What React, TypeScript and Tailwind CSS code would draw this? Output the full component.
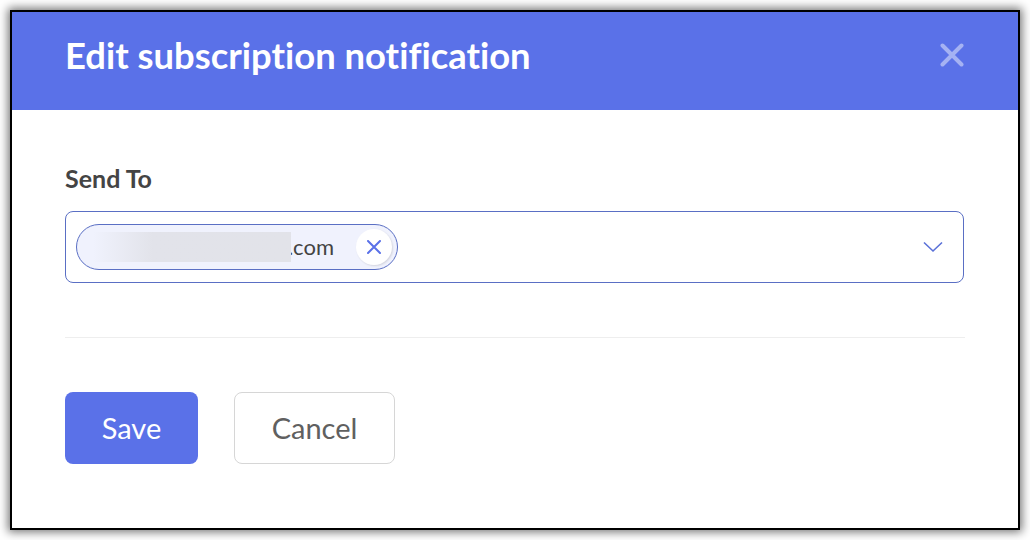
const App = () => {
  return (
    <div className="w-[1030px] h-[540px] bg-white p-[10px] font-['Lato',sans-serif] [font-variant-ligatures:none]">
      <div className="w-[1010px] h-[520px] border-2 border-black bg-white shadow-[0_0_9px_2px_rgba(0,0,0,0.55)] flex flex-col">
        {/* Header */}
        <div className="h-[98px] shrink-0 bg-[#5a71e8] flex items-center justify-between pl-[53px] pr-[56px] pb-[12px]">
          <h1 className="text-[36.4px] leading-[44px] font-bold text-white">Edit subscription notification</h1>
          <svg className="-mr-[2px]" width="24" height="24" viewBox="0 0 24 24" fill="none" stroke="#a5b2f3" strokeWidth="4" strokeLinecap="round">
            <path d="M2.5 2.5 L21.5 21.5 M21.5 2.5 L2.5 21.5" />
          </svg>
        </div>

        {/* Body */}
        <div className="flex-1 px-[53px] pt-[53px]">
          <label className="block text-[25px] leading-[30px] font-bold text-[#444444]">Send To</label>
          <div className="mt-[18px] w-[899px] h-[72px] border border-[#5a6fc4] rounded-[8px] flex items-center justify-between pl-[10px] pr-[20px]">
            <div className="relative h-[46px] w-[322px] border border-[#5a6fc4] rounded-full bg-[#f0f2fd] flex items-center justify-end pr-[5px]">
              {/* blurred address */}
              <div className="absolute left-[16px] top-[7px] w-[198px] h-[30px] bg-gradient-to-r from-[#f0f2fd] via-[#e2e3ea] via-[30%] to-[#e2e3e9]" />
              <span className="text-[22px] leading-[28px] text-[#444444] mr-[22px] -mt-[1px]">.com</span>
              <div className="w-[36px] h-[36px] rounded-full bg-white shadow-[1px_1px_2px_rgba(0,0,0,0.12)] flex items-center justify-center">
                <svg width="14" height="14" viewBox="0 0 14 14" fill="none" stroke="#5a71e8" strokeWidth="2" strokeLinecap="round">
                  <path d="M1 1 L13 13 M13 1 L1 13" />
                </svg>
              </div>
            </div>
            <svg width="20" height="12" viewBox="0 0 20 12" fill="none" stroke="#5a71d8" strokeWidth="1.6">
              <path d="M1 1.5 L10 10 L19 1.5" />
            </svg>
          </div>

          <div className="mt-[54px] w-[900px] h-px bg-[#eeeeee]" />

          <div className="mt-[54px] flex gap-[36px]">
            <button className="w-[133px] h-[72px] rounded-[8px] bg-[#5a71e8] text-white text-[29px]">Save</button>
            <button className="w-[161px] h-[72px] rounded-[8px] border border-[#d6d6d6] bg-white text-[#606060] text-[29px]">Cancel</button>
          </div>
        </div>
      </div>
    </div>
  );
};

export default App;
